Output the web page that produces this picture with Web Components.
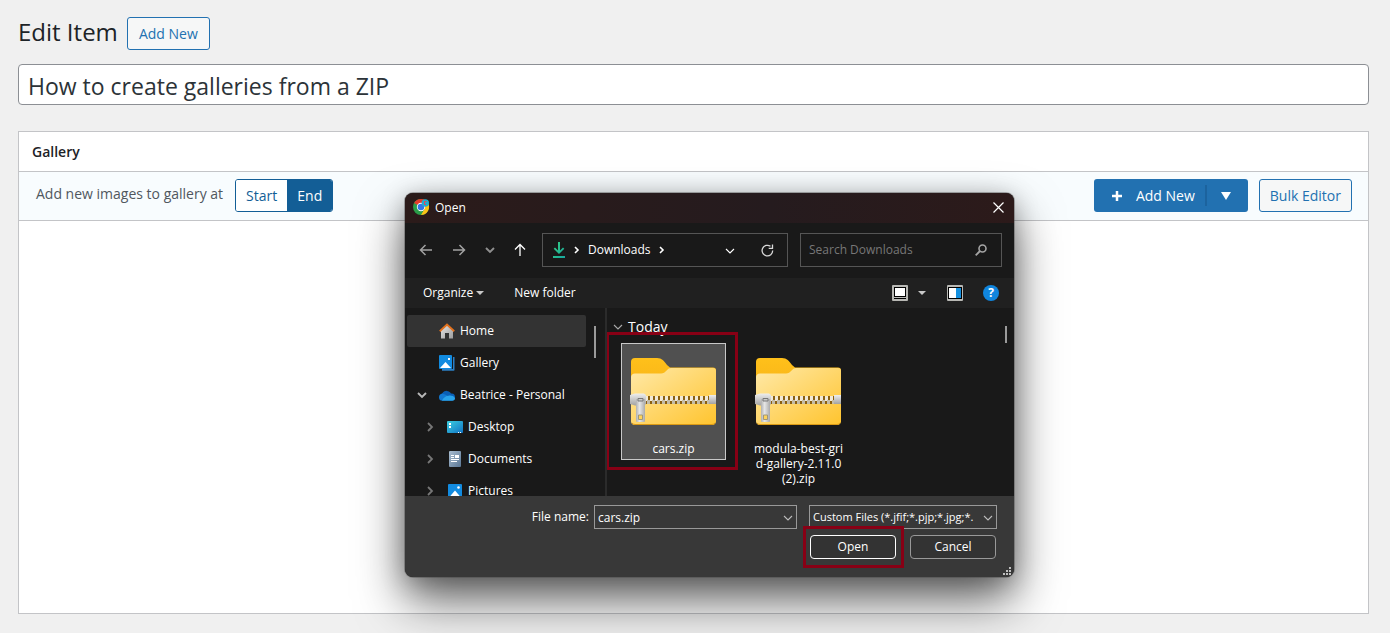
<!DOCTYPE html>
<html lang="en">
<head>
<meta charset="utf-8">
<title>Edit Item</title>
<style>
  body { margin: 0; background: #f0f0f0; color: #1d2327; font: 14px/20px "Open Sans", "Noto Sans", sans-serif; }
</style>
</head>
<body>
<edit-page></edit-page>
<script>
const BASE = `<style>
  *, *::before, *::after { box-sizing: border-box; }
  button, input, select { font: inherit; color: inherit; margin: 0; }
  svg { display: block; flex: none; }
</style>`;

function define(name, markup, setup) {
  const template = document.createElement('template');
  template.innerHTML = BASE + markup;
  customElements.define(name, class extends HTMLElement {
    constructor() {
      super();
      this.attachShadow({ mode: 'open' }).append(template.content.cloneNode(true));
    }
    connectedCallback() { if (setup) setup(this.shadowRoot, this); }
  });
}

/* Icons: one element, picked by the name attribute */
const ICONS = {
  back: [14, 14, '<path d="M13 7H1.5M6.5 2 1.5 7l5 5" fill="none" stroke="#a2a2a2" stroke-width="1.5"/>'],
  forward: [14, 14, '<path d="M1 7h11.5M7.5 2l5 5-5 5" fill="none" stroke="#a2a2a2" stroke-width="1.5"/>'],
  up: [12, 14, '<path d="M6 13V1.5M1 6.5l5-5 5 5" fill="none" stroke="#fff" stroke-width="1.3"/>'],
  down: [10, 6, '<path d="M1 1l4 4 4-4" fill="none" stroke="currentColor" stroke-width="1.1"/>'],
  downbold: [10, 6, '<path d="M1 1l4 4 4-4" fill="none" stroke="currentColor" stroke-width="1.9"/>'],
  right: [6, 10, '<path d="M1 1l4 4-4 4" fill="none" stroke="currentColor" stroke-width="1.8"/>'],
  crumb: [5, 8, '<path d="M1 1l3 3-3 3" fill="none" stroke="#fff" stroke-width="1.6"/>'],
  caret: [8, 4, '<path d="M0 0h8L4 4z" fill="#c8c8c8"/>'],
  triangle: [10, 8, '<path d="M0 0h10L5 8z" fill="#fff"/>'],
  plus: [10, 10, '<path d="M5 0v10M0 5h10" stroke="#fff" stroke-width="2.5"/>'],
  close: [11, 11, '<path d="M.5.5l10 10M10.500.5l-10 10" stroke="#fff" stroke-width="1.2"/>'],
  download: [12, 16, '<defs><linearGradient id="d" x2="1" y2="1"><stop stop-color="#35d07f"/><stop offset="1" stop-color="#17a6a0"/></linearGradient></defs><path fill="url(#d)" d="M5 0h2v8.5l3-3 1.300 1.300L6 12 .7 6.800 2 5.500l3 3zM0 14h12v2H0z"/>'],
  refresh: [13, 13, '<path d="M11.700 6.500A5.300 5.300 0 1 1 9.500 2.300" fill="none" stroke="#d8d8d8" stroke-width="1.3"/><path d="M11.500.5v3.800H7.700" fill="none" stroke="#d8d8d8" stroke-width="1.3"/>'],
  search: [12, 12, '<circle cx="7.500" cy="4.500" r="3.500" fill="none" stroke="#a4a4a4" stroke-width="1.6"/><path d="M5 7 .7 11.300" stroke="#a4a4a4" stroke-width="1.8"/>'],
  view: [16, 16, '<rect width="16" height="16" rx="1" fill="#b8b8b4"/><rect x="2" y="2" width="12" height="10" fill="#000"/><rect x="3" y="3" width="10" height="8" fill="#fff"/><path d="M2 13.500h12" stroke="#000"/>'],
  pane: [16, 16, '<rect width="16" height="16" rx="1" fill="#b8b8b4"/><rect x="1" y="2" width="14" height="12" fill="#000"/><rect x="2" y="3" width="7" height="10" fill="#fff"/><rect x="9" y="3" width="5" height="10" fill="#1490e0"/>'],
  chrome: [16, 16, '<circle cx="8" cy="8" r="8" fill="#2a9d49"/><path d="M8 8 1.100 4A8 8 0 0 1 15 4z" fill="#e43b2c"/><path d="M8 4h7a8 8 0 0 1-7 12l3.500-6z" fill="#fbc116"/><circle cx="8" cy="8" r="4.200" fill="#fff"/><circle cx="8" cy="8" r="3.300" fill="#3477e8"/><circle cx="12.300" cy="4" r="3.700" fill="#1faed0"/><path d="M13.500 2.500h-2v3h1.500" stroke="#e0455e" fill="none"/>'],
  home: [16, 16, '<defs><linearGradient id="h" x2="1" y2="1"><stop stop-color="#e6e6e6"/><stop offset="1" stop-color="#9c9c9c"/></linearGradient></defs><path d="M2 7l6-5 6 5v8.500h-4V10H6v5.500H2z" fill="url(#h)"/><path d="M.8 8.200 8 1.500l7.200 6.700" fill="none" stroke="#e2711d" stroke-width="1.9"/>'],
  gallery: [16, 16, '<path d="M3 14h11V2h1.500v13a.8.8 0 0 1-.8.8H3z" fill="#2b7fc4"/><rect width="13" height="14" rx="1" fill="#128be0"/><path d="M1 13 6.500 7l5.500 6z" fill="#fff"/><path d="M9 3h2v2H9z" fill="#fff"/>'],
  cloud: [16, 11, '<path d="M4 10.500a4 4 0 0 1-.5-7.500A5 5 0 0 1 12 3.500a3.500 3.500 0 0 1 1 7z" fill="#0a5fb5"/><path d="M3.500 10.800a3.500 3.500 0 0 1 0-7c2 0 3 1 5 2.200z" fill="#1279d2"/><path d="M3 10.800c1-3 4-5 6.500-5 1-.6 5.500-.5 6.500 2.500 0 1.500-1 2.500-2.500 2.500z" fill="#28a3ea"/>'],
  desktop: [16, 12, '<defs><linearGradient id="k" x2="1" y2="1"><stop stop-color="#3ccfe0"/><stop offset="1" stop-color="#1173c4"/></linearGradient></defs><rect width="16" height="12" rx="1" fill="url(#k)"/><path d="M2 2h2v2H2zM2 5h2v2H2zM11 11h1v1h-1zM13 11h1v1h-1z" fill="#fff"/>'],
  documents: [16, 16, '<defs><linearGradient id="o" x2="1" y2="1"><stop stop-color="#a9bdd0"/><stop offset="1" stop-color="#5b7795"/></linearGradient></defs><rect x="2" width="12" height="16" rx="1" fill="url(#o)"/><path d="M4 4.500h3M4 6.500h3M4 8.500h8M4 10.500h6" stroke="#fff"/><path d="M8 4h4v3H8z" fill="#fff"/>'],
  pictures: [16, 16, '<rect x="1" y="1" width="14" height="14" rx="1" fill="#128be0"/><path d="M2 14.500 8 7.500l6 7z" fill="#fff"/><circle cx="11.500" cy="4.500" r="1.300" fill="#fff"/>'],
  grip: [8, 8, '<path d="M6 0h2v2H6zM3 3h2v2H3zM6 3h2v2H6zM0 6h2v2H0zM3 6h2v2H3zM6 6h2v2H6z" fill="#c0c0c0"/>'],
  zip: [86, 68, `<defs>
    <linearGradient id="f" x2="1" y2="1"><stop stop-color="#ffe9a8"/><stop offset="1" stop-color="#ffc42e"/></linearGradient>
    <linearGradient id="t" x2="0" y2="1"><stop stop-color="#ffc01a"/><stop offset="1" stop-color="#f0a818"/></linearGradient>
    <linearGradient id="m" x2="0" y2="1"><stop stop-color="#eee"/><stop offset="1" stop-color="#a2a2a2"/></linearGradient>
    <linearGradient id="p" x2="1" y2="0"><stop stop-color="#b0b0b0"/><stop offset=".4" stop-color="#e6e6e6"/><stop offset="1" stop-color="#aaa"/></linearGradient>
    <pattern id="z" width="5" height="8" patternUnits="userSpaceOnUse" x="14" y="38"><path d="M0 0h5v8H0z" fill="#8a6010"/><path d="M0 0h3v5H0z" fill="#f2ead8"/><path d="M2 4h3v4H2z" fill="#c4bca8"/></pattern></defs>
    <path d="M0 4a4 4 0 0 1 4-4h22c5 0 7 3 10 7l3 2.500h43a3 3 0 0 1 3 3V64H0z" fill="url(#t)"/>
    <path d="M0 19a4 4 0 0 1 4-3.500h26c5 0 6-5.500 10-5.500h42a3 3 0 0 1 3 3v50a4 4 0 0 1-4 4H4a4 4 0 0 1-4-4z" fill="url(#f)"/>
    <path d="M1 65q1 1.500 3 1.500h77q2 0 3-1.500" fill="none" stroke="#dc9a14"/>
    <path d="M14 38h65v8H14z" fill="url(#z)"/>
    <rect x="78" y="37" width="7" height="9" fill="url(#m)"/>
    <path d="M-1 37l5-1.500h9l2 1.500v9l-2 1.500H4L-1 46z" fill="url(#m)"/>
    <path d="M5 41h9v22a1 1 0 0 1-1 1H6a1 1 0 0 1-1-1z" fill="url(#p)"/>
    <path d="M7 40.500h5v2.500H7z" fill="#ccc" stroke="#777"/>
    <path d="M7.500 57h4v4.500h-4z" fill="#ffd35a" stroke="#a09878"/>`],
};
define('ui-icon', `<style>:host { display: block; flex: none; }</style><span></span>`, (root, host) => {
  const [w, h, body] = ICONS[host.getAttribute('name')];
  root.querySelector('span').innerHTML =
    `<svg width="${w}" height="${h}" viewBox="0 0 ${w} ${h}" overflow="visible" aria-hidden="true">${body}</svg>`;
});

/* Outlined action button of the admin page */
define('outline-button', `<style>
  :host { display: block; }
  button { display: block; height: 33px; min-width: 83px; padding: 0 10px; border: 1px solid #2271b1; border-radius: 3px; background: #f6f7f7; color: #2271b1; white-space: nowrap; }
</style><button type="button"><slot></slot></button>`);

define('page-heading', `<style>
  :host { display: flex; align-items: flex-start; gap: 9px; padding-top: 17px; }
  h1 { margin: 0; font-size: 24px; line-height: 30px; font-weight: 400; }
</style><h1><slot></slot></h1><outline-button>Add New</outline-button>`);

define('title-field', `<style>
  :host { display: block; margin: 14px 0 26px; }
  input { display: block; width: 100%; height: 41px; padding: 2px 9px 0; border: 1px solid #8c8f94; border-radius: 4px; background: #fff; color: #2c3338; font-size: 23px; outline: 0; }
</style><input type="text" aria-label="Title" value="How to create galleries from a ZIP">`);

define('position-toggle', `<style>
  :host { display: flex; align-items: center; gap: 12px; color: #50575e; }
  #caption { padding-bottom: 3px; }
  .group { display: flex; border: 1px solid #135e96; border-radius: 3px; overflow: hidden; }
  label { position: relative; height: 31px; padding: 0 10px; line-height: 31px; background: #fff; color: #135e96; }
  label:has(:checked) { background: #135e96; color: #fff; }
  input { position: absolute; inset: 0; opacity: 0; }
</style>
<span id="caption">Add new images to gallery at</span>
<div class="group" role="radiogroup" aria-labelledby="caption">
  <label><input type="radio" name="at">Start</label><label><input type="radio" name="at" checked>End</label>
</div>`);

define('split-button', `<style>
  :host { display: flex; height: 33px; border-radius: 3px; overflow: hidden; background: #2271b1; color: #fff; }
  button { display: flex; align-items: center; border: 0; background: none; }
  .main { gap: 14px; padding: 0 10px 0 18px; }
  .more { padding: 0 17px 0 16px; position: relative; }
  .more::before { content: ""; position: absolute; left: 0; top: 6px; bottom: 6px; width: 2px; background: #1c639e; }
</style>
<button type="button" class="main"><ui-icon name="plus"></ui-icon>Add New</button>
<button type="button" class="more" aria-label="More ways to add"><ui-icon name="triangle"></ui-icon></button>`);

define('gallery-panel', `<style>
  :host { display: flex; flex-direction: column; flex: 1; border: 1px solid #c3c4c7; background: #fff; }
  h2 { margin: 0; padding: 0 13px; font-size: 14px; line-height: 39px; font-weight: 600; border-bottom: 1px solid #c3c4c7; }
  .bar { display: flex; align-items: flex-start; justify-content: space-between; height: 49px; padding: 7px 16px 0 17px; background: #f8fcfe; border-bottom: 1px solid #c3c4c7; }
  .actions { display: flex; gap: 11px; }
</style>
<h2>Gallery</h2>
<div class="bar"><position-toggle></position-toggle>
<div class="actions"><split-button></split-button><outline-button>Bulk Editor</outline-button></div></div>`);

/* File dialog parts */
define('dialog-title', `<style>
  :host { display: flex; align-items: center; gap: 6px; height: 30px; padding: 0 10px 2px 8px; background: linear-gradient(90deg, #2b1b1a, #251b1e 60%, #2c1a1a); }
  span { flex: 1; padding-top: 2px; }
  button { padding: 0; border: 0; background: none; }
</style><ui-icon name="chrome"></ui-icon><span><slot></slot></span><button type="button" aria-label="Close"><ui-icon name="close"></ui-icon></button>`);

define('dialog-nav', `<style>
  :host { display: flex; align-items: center; height: 55px; padding: 0 12px 1px 14px; color: #c8c8c8; }
  button { display: grid; place-items: center; padding: 0; border: 0; background: none; }
  .arrows { display: flex; align-items: center; width: 123px; gap: 19px; }
  .recent { color: #8f8f8f; }
  .path { display: flex; align-items: center; width: 246px; height: 34px; padding: 0 13px 0 10px; border: 1px solid #555; color: #fff; font-weight: 500; }
  .path span { margin: 0 8px 0 9px; }
  .path .first { margin-left: 9px; }
  .path .drop { margin: 2px 26px 0 auto; }
  .find { display: flex; align-items: center; flex: 1; height: 34px; margin-left: 12px; padding: 0 14px 0 8px; border: 1px solid #555; }
  input { flex: 1; min-width: 0; padding: 0; border: 0; background: none; outline: 0; }
  input::placeholder { color: #777; }
</style>
<div class="arrows">
  <button type="button" aria-label="Back"><ui-icon name="back"></ui-icon></button>
  <button type="button" aria-label="Forward"><ui-icon name="forward"></ui-icon></button>
  <button type="button" class="recent" aria-label="Recent locations"><ui-icon name="downbold"></ui-icon></button>
  <button type="button" aria-label="Up"><ui-icon name="up"></ui-icon></button>
</div>
<div class="path"><ui-icon name="download"></ui-icon><ui-icon class="first" name="crumb"></ui-icon><span>Downloads</span><ui-icon name="crumb"></ui-icon>
  <button type="button" class="drop" aria-label="Previous locations"><ui-icon name="down"></ui-icon></button>
  <button type="button" aria-label="Refresh"><ui-icon name="refresh"></ui-icon></button></div>
<div class="find"><input type="search" aria-label="Search Downloads" placeholder="Search Downloads"><ui-icon name="search"></ui-icon></div>`);

define('dialog-tools', `<style>
  :host { display: flex; align-items: center; height: 30px; padding: 0 15px 0 18px; background: #202020; }
  button { display: flex; align-items: center; gap: 3px; padding: 0; border: 0; background: none; }
  .folder { margin: 0 auto 0 30px; }
  .view { gap: 10px; margin-right: 21px; }
  .help { display: block; width: 16px; height: 16px; margin-left: 20px; border-radius: 50%; background: #1085dd; font-size: 12px; line-height: 16px; font-weight: 700; text-align: center; }
</style>
<button type="button">Organize<ui-icon name="caret"></ui-icon></button>
<button type="button" class="folder">New folder</button>
<button type="button" class="view" aria-label="Change view"><ui-icon name="view"></ui-icon><ui-icon name="caret"></ui-icon></button>
<button type="button" aria-label="Preview pane"><ui-icon name="pane"></ui-icon></button>
<button type="button" class="help">?</button>`);

define('nav-item', `<style>
  :host { display: flex; align-items: center; height: 32px; padding-left: 32px; white-space: nowrap; }
  :host([current]) { background: #333; border-radius: 2px; }
  :host([arrow]) { padding-left: 10px; }
  :host([nested]) { padding-left: 20px; }
  .arrow { display: none; color: #b8b8b8; }
  :host([arrow]) .arrow { display: block; width: 22px; }
  :host([nested]) .arrow { width: 20px; color: #777; }
  a { display: flex; align-items: center; gap: 5px; color: #fff; text-decoration: none; }
</style><span class="arrow"></span><a href="#"><span class="icon"></span><slot></slot></a>`, (root, host) => {
  if (host.hasAttribute('arrow'))
    root.querySelector('.arrow').innerHTML = `<ui-icon name="${host.getAttribute('arrow')}"></ui-icon>`;
  root.querySelector('.icon').innerHTML = `<ui-icon name="${host.getAttribute('icon')}"></ui-icon>`;
});

define('folder-tree', `<style>
  :host { display: flex; justify-content: space-between; width: 200px; height: 188px; padding: 7px 9px 0 2px; overflow: hidden; }
  nav { width: 179px; }
  i { width: 2px; height: 32px; margin-top: 11px; background: #9a9a9a; }
</style>
<nav aria-label="Folders">
  <nav-item icon="home" current>Home</nav-item>
  <nav-item icon="gallery">Gallery</nav-item>
  <nav-item icon="cloud" arrow="downbold">Beatrice - Personal</nav-item>
  <nav-item icon="desktop" arrow="right" nested>Desktop</nav-item>
  <nav-item icon="documents" arrow="right" nested>Documents</nav-item>
  <nav-item icon="pictures" arrow="right" nested>Pictures</nav-item>
</nav><i></i>`);

define('file-tile', `<style>
  :host { display: block; position: relative; width: 105px; }
  button { display: flex; flex-direction: column; align-items: center; width: 100%; min-height: 117px; padding: 14px 6px 1px; border: 1px solid transparent; background: none; line-height: 15px; }
  :host([selected]) button { background: #505050; border-color: #c8c8c8; }
  .name { margin-top: 15px; white-space: nowrap; }
  .ring { display: none; position: absolute; inset: -11px -12px -10px -15px; border: 3px solid #880015; pointer-events: none; }
  :host([selected]) .ring { display: block; }
</style><button type="button"><ui-icon name="zip"></ui-icon><span class="name"><slot></slot></span></button><div class="ring"></div>`);

define('file-list', `<style>
  :host { display: flex; justify-content: space-between; flex: 1; height: 188px; padding: 0 7px 0 6px; border-left: 2px solid #2b2b2b; overflow: hidden; }
  h3 { display: flex; align-items: center; gap: 5px; margin: 0; padding-top: 9px; font-size: 14px; line-height: 20px; font-weight: 400; }
  h3 ui-icon { color: #aaa; }
  .tiles { display: flex; align-items: flex-start; gap: 20px; margin: 6px 0 0 8px; }
  i { width: 2px; height: 17px; margin-top: 18px; background: #9a9a9a; }
</style>
<div><h3><ui-icon name="down"></ui-icon>Today</h3>
<div class="tiles"><file-tile selected>cars.zip</file-tile><file-tile>modula-best-gri<br>d-gallery-2.11.0<br>(2).zip</file-tile></div></div><i></i>`);

define('dialog-footer', `<style>
  :host { display: block; position: relative; height: 81px; padding: 9px 17px 0; background: #383838; }
  .row { display: flex; align-items: center; justify-content: flex-end; }
  .box { display: flex; align-items: center; height: 24px; border: 1px solid #999; background: #383838; position: relative; }
  .box ui-icon { position: absolute; right: 3px; top: 9px; color: #bbb; pointer-events: none; }
  .name { width: 203px; margin: 0 12px 0 5px; }
  .type { width: 188px; }
  input, select { width: 100%; height: 22px; padding: 0 14px 0 3px; border: 0; background: none; outline: 0; appearance: none; }
  select { font-size: 11px; }
  .actions { gap: 14px; margin: 6px 1px 0 0; }
  .actions > div { position: relative; }
  button { display: block; width: 86px; height: 24px; padding: 0; border: 1px solid #999; border-radius: 4px; background: #333; line-height: 20px; }
  .open { border-color: #fff; }
  .ring { position: absolute; inset: -9px -8px -9px -7px; border: 3px solid #880015; pointer-events: none; }
  .grip { position: absolute; right: 3px; bottom: 2px; }
</style>
<div class="row"><label for="name">File name:</label>
  <div class="box name"><input id="name" type="text" value="cars.zip"><ui-icon name="down"></ui-icon></div>
  <div class="box type"><select aria-label="File type"><option>Custom Files (*.jfif;*.pjp;*.jpg;*.</option></select><ui-icon name="down"></ui-icon></div></div>
<div class="row actions"><div><button type="button" class="open">Open</button><div class="ring"></div></div><button type="button">Cancel</button></div>
<ui-icon class="grip" name="grip"></ui-icon>`);

define('file-dialog', `<style>
  :host { display: block; position: absolute; left: 405px; top: 193px; width: 609px; border-radius: 8px; background: #191919; color: #fff; font-size: 12px; line-height: 16px;
    box-shadow: 0 0 0 1px rgba(70, 70, 70, .4), 0 24px 48px rgba(0, 0, 0, .6), 0 4px 24px rgba(0, 0, 0, .25); }
  .clip { border-radius: 8px; overflow: hidden; }
  .body { display: flex; }
</style>
<div class="clip" role="dialog" aria-label="Open">
<dialog-title>Open</dialog-title><dialog-nav></dialog-nav><dialog-tools></dialog-tools>
<div class="body"><folder-tree></folder-tree><file-list></file-list></div>
<dialog-footer></dialog-footer></div>`);

define('edit-page', `<style>
  :host { display: flex; flex-direction: column; position: relative; min-height: 100vh; padding: 0 21px 19px 18px; box-sizing: border-box; overflow: hidden; }
</style>
<page-heading>Edit Item</page-heading>
<title-field></title-field>
<gallery-panel></gallery-panel>
<file-dialog></file-dialog>`);
</script>
</body>
</html>
